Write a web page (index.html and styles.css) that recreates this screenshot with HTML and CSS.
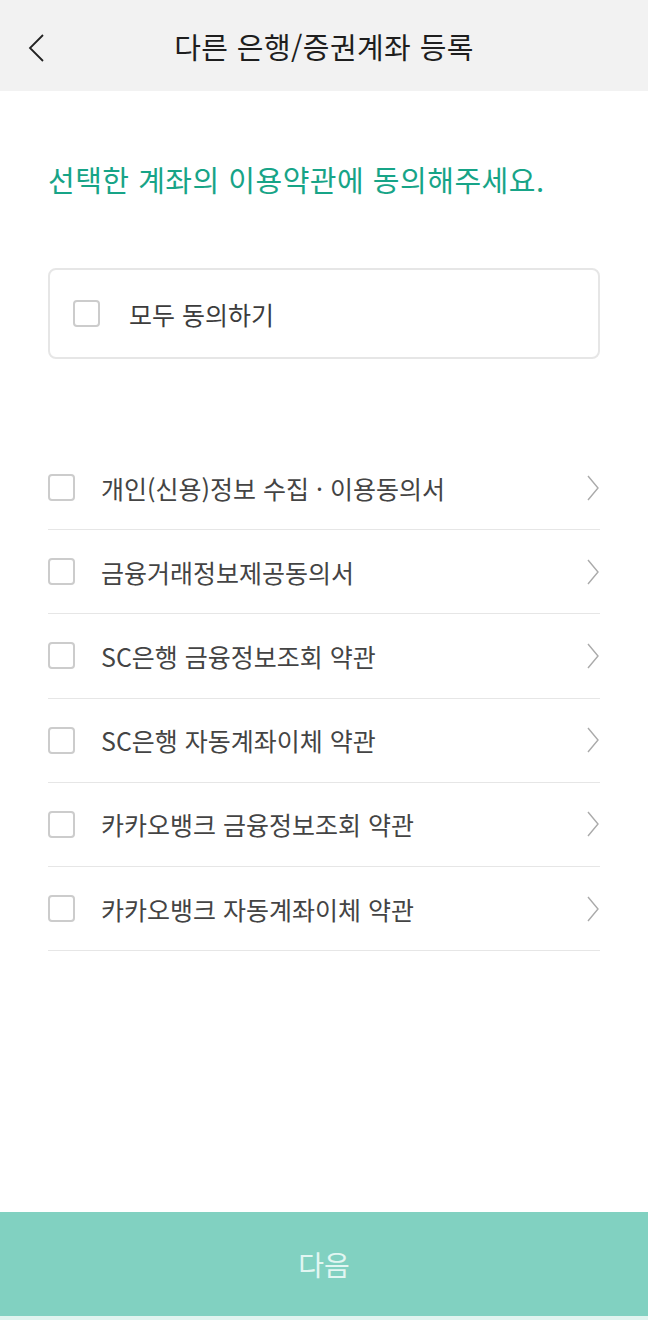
FILE: index.html
```html
<!doctype html>
<html lang="ko">
<head>
    <meta charset="UTF-8">
    <meta name="viewport" content="width=device-width, initial-scale=1.0">
    <title>다른 은행/증권계좌 등록</title>
    <link rel="stylesheet" href="styles.css">
</head>
<body>
<header class="topbar">
    <button class="back" aria-label="뒤로">
        <svg width="20" height="30" viewBox="0 0 20 30">
            <polyline points="16,2 3,15 16,28" fill="none" stroke="#222" stroke-width="1.8"/>
        </svg>
    </button>
    <h1 class="title">다른 은행/증권계좌 등록</h1>
</header>
<main class="content">
    <h2 class="lead">선택한 계좌의 이용약관에 동의해주세요.</h2>
    <label class="all-box">
        <span class="check"></span>
        <span class="all-text">모두 동의하기</span>
    </label>
    <ul class="terms">
        <li class="term">
            <span class="check"></span>
            <span class="term-text">개인(신용)정보 수집 · 이용동의서</span>
            <svg class="arrow" width="12" height="26" viewBox="0 0 12 26"><polyline points="1,1 11,13 1,25" fill="none" stroke="#aaa" stroke-width="1.4"/></svg>
        </li>
        <li class="term">
            <span class="check"></span>
            <span class="term-text">금융거래정보제공동의서</span>
            <svg class="arrow" width="12" height="26" viewBox="0 0 12 26"><polyline points="1,1 11,13 1,25" fill="none" stroke="#aaa" stroke-width="1.4"/></svg>
        </li>
        <li class="term">
            <span class="check"></span>
            <span class="term-text">SC은행 금융정보조회 약관</span>
            <svg class="arrow" width="12" height="26" viewBox="0 0 12 26"><polyline points="1,1 11,13 1,25" fill="none" stroke="#aaa" stroke-width="1.4"/></svg>
        </li>
        <li class="term">
            <span class="check"></span>
            <span class="term-text">SC은행 자동계좌이체 약관</span>
            <svg class="arrow" width="12" height="26" viewBox="0 0 12 26"><polyline points="1,1 11,13 1,25" fill="none" stroke="#aaa" stroke-width="1.4"/></svg>
        </li>
        <li class="term">
            <span class="check"></span>
            <span class="term-text">카카오뱅크 금융정보조회 약관</span>
            <svg class="arrow" width="12" height="26" viewBox="0 0 12 26"><polyline points="1,1 11,13 1,25" fill="none" stroke="#aaa" stroke-width="1.4"/></svg>
        </li>
        <li class="term">
            <span class="check"></span>
            <span class="term-text">카카오뱅크 자동계좌이체 약관</span>
            <svg class="arrow" width="12" height="26" viewBox="0 0 12 26"><polyline points="1,1 11,13 1,25" fill="none" stroke="#aaa" stroke-width="1.4"/></svg>
        </li>
    </ul>
</main>
<footer class="bottom">
    <button class="next" disabled>다음</button>
</footer>
</body>
</html>
```

FILE: styles.css
```css
*
{
    box-sizing: border-box;
    font-family: "Noto Sans CJK KR", "Noto Sans", sans-serif;
}

html, body
{
    margin: 0;
    padding: 0;
}

body
{
    height: 1320px;
    display: flex;
    flex-direction: column;
    background-color: #ffffff;
}

.topbar
{
    height: 91px;
    background-color: #f2f2f2;
    display: flex;
    align-items: center;
    justify-content: center;
    position: relative;
}

.back
{
    position: absolute;
    left: 27px;
    top: 33px;
    padding: 0;
    border: none;
    background: none;
    display: flex;
}

.title
{
    margin: 0;
    font-size: 29px;
    font-weight: 400;
    color: #1e1e1e;
    letter-spacing: 0.4px;
}

.content
{
    flex: 1;
    padding: 0 48px;
}

.lead
{
    margin: 67px 0 0;
    font-size: 29px;
    line-height: 42px;
    font-weight: 400;
    color: #17a487;
    letter-spacing: 0.5px;
}

.all-box
{
    margin-top: 68px;
    height: 91px;
    border: 2px solid #e6e6e6;
    border-radius: 8px;
    display: flex;
    align-items: center;
    padding-left: 23px;
}

.check
{
    width: 27px;
    height: 27px;
    border: 2px solid #cccccc;
    border-radius: 4px;
    flex-shrink: 0;
}

.all-text
{
    margin-left: 29px;
    font-size: 25px;
    color: #3c3c3c;
}

.terms
{
    list-style: none;
    margin: 87px 0 0;
    padding: 0;
}

.term
{
    height: 84.2px;
    display: flex;
    align-items: center;
    border-bottom: 1px solid #e6e6e6;
}

.term-text
{
    flex: 1;
    margin-left: 26px;
    font-size: 25px;
    color: #444444;
}

.arrow
{
    margin-right: 1px;
}

.bottom
{
    border-bottom: 4px solid #dff4ef;
}

.next
{
    width: 100%;
    height: 104px;
    border: none;
    background-color: #81d1c1;
    color: #e2f6f2;
    font-size: 28px;
    display: block;
}
```
